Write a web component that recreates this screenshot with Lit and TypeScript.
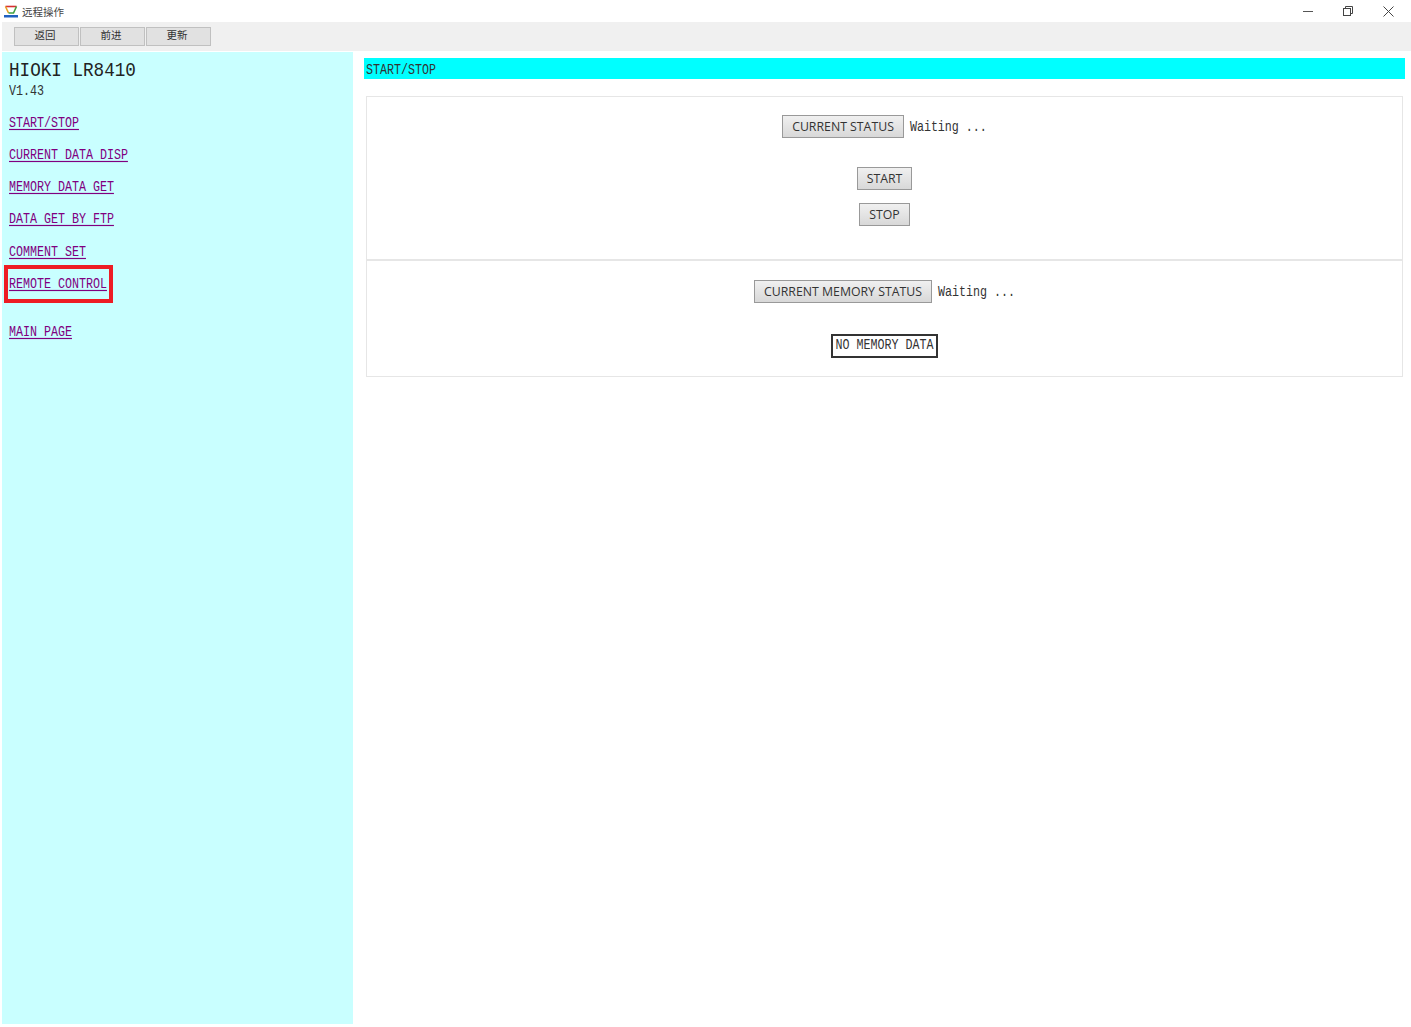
import { LitElement, html, css } from "lit";
import { customElement } from "lit/decorators.js";

@customElement("app-root")
export class AppRoot extends LitElement {
  static styles = css`
    :host { display: block; width: 1411px; height: 1027px; background: #fff; overflow: hidden; font-family: "Liberation Mono", monospace; color: #222; }
    .titlebar { height: 22px; display: flex; align-items: center; padding-left: 4px; }
    .logo { display: block; margin-right: 4px; }
    .title { font: 10.5px "Noto Sans CJK SC", sans-serif; color: #444; }
    .winctl { margin-left: auto; display: flex; gap: 30px; padding-right: 17px; align-items: center; }
    .winctl svg { display: block; }
    .toolbar { height: 29px; margin-left: 2px; background: #f0f0f0; display: flex; gap: 1px; padding: 4.5px 0 0 11.5px; box-sizing: border-box; }
    .tb { width: 65px; height: 19px; box-sizing: border-box; background: #e1e1e1; border: 1.5px solid #c0c0c0; font: 10.5px/14px "Noto Sans CJK SC", sans-serif; color: #333; text-align: center; padding-right: 2px; }
    .body { display: flex; height: 972px; margin-top: 1px; }
    .side { width: 351px; margin-left: 2px; background: #c9ffff; padding: 8px 0 0 7px; box-sizing: border-box; position: relative; }
    .mono { font-size: 11.67px; transform: scaleY(1.18); color: #333; white-space: pre; }
    .h1 { font-size: 17.64px; line-height: 20px; transform: scaleY(1.18); transform-origin: left center; color: #222; }
    .ver { line-height: 16px; margin-top: 3px; transform-origin: left center; }
    .links { display: flex; flex-direction: column; margin-top: 16px; }
    a { line-height: 16px; height: 16px; margin-bottom: 16.15px; align-self: flex-start; transform-origin: left center; }
    a.mono { color: #800080; text-decoration: underline; text-underline-offset: 2px; }
    a.gap { margin-top: 16px; }
    .mark { position: absolute; left: 2px; top: 213px; width: 109px; height: 38px; border: 4px solid #ed1c24; box-sizing: border-box; }
    .main { flex: 1; padding: 6px 6px 0 11px; min-width: 0; }
    .head { height: 21px; background: #00ffff; padding-left: 2px; line-height: 27px; }
    .head span { display: block; transform-origin: left center; }
    .box { margin: 17px 2px 0 2px; border: 1px solid #e6e6e6; display: flex; flex-direction: column; }
    .sec { display: flex; flex-direction: column; align-items: center; }
    .s1 { height: 164px; padding-top: 18px; box-sizing: border-box; border-bottom: 2px solid #e6e6e6; }
    .s2 { height: 115px; padding-top: 19px; box-sizing: border-box; }
    .row { display: flex; align-items: center; gap: 6px; height: 23px; }
    .btn { height: 23px; box-sizing: border-box; padding: 0 9px; background: linear-gradient(#f0f0f0, #d8d8d8); border: 1px solid #999; font: 12.3px/21px "Open Sans", sans-serif; color: #333; white-space: nowrap; }
    .b1 { margin-top: 29px; }
    .b2 { margin-top: 13px; }
    .nomem { margin-top: 31px; height: 24px; box-sizing: border-box; border: 2px solid #333; padding: 0 2.5px; line-height: 21px; }
    .nomem span { display: block; }
  `;

  render() {
    const links = ["START/STOP", "CURRENT DATA DISP", "MEMORY DATA GET", "DATA GET BY FTP", "COMMENT SET", "REMOTE CONTROL"];
    return html`
      <div class="titlebar">
        <svg class="logo" width="14" height="13" viewBox="0 0 14 13">
          <path d="M1.5 1.5h11" stroke="#d83030" stroke-width="1.6"/>
          <path d="M1.5 1.5l3 6.5" stroke="#e8a020" stroke-width="1.6" fill="none"/>
          <path d="M12.5 1.5l-3 6.5H4.5" stroke="#40a040" stroke-width="1.6" fill="none"/>
          <rect x="0" y="10" width="14" height="2.5" fill="#2060c0"/>
        </svg>
        <span class="title">远程操作</span>
        <div class="winctl">
          <svg width="10" height="10" viewBox="0 0 10 10"><path d="M0 5.5h10" stroke="#555"/></svg>
          <svg width="10" height="10" viewBox="0 0 10 10" fill="none" stroke="#444"><rect x=".5" y="2.5" width="7" height="7"/><path d="M2.5 2.5v-2h7v7h-2"/></svg>
          <svg width="11" height="11" viewBox="0 0 11 11"><path d="M.5.5l10 10M10.5.5l-10 10" stroke="#444"/></svg>
        </div>
      </div>
      <div class="toolbar">
        <div class="tb">返回</div><div class="tb">前进</div><div class="tb">更新</div>
      </div>
      <div class="body">
        <div class="side">
          <div class="h1">HIOKI LR8410</div>
          <div class="ver mono">V1.43</div>
          <div class="links">
            ${links.map((l) => html`<a class="mono">${l}</a>`)}
            <a class="mono gap">MAIN PAGE</a>
          </div>
          <div class="mark"></div>
        </div>
        <div class="main">
          <div class="head"><span class="mono">START/STOP</span></div>
          <div class="box">
            <div class="sec s1">
              <div class="row"><div class="btn">CURRENT STATUS</div><span class="mono">Waiting ...</span></div>
              <div class="btn b1">START</div>
              <div class="btn b2">STOP</div>
            </div>
            <div class="sec s2">
              <div class="row"><div class="btn">CURRENT MEMORY STATUS</div><span class="mono">Waiting ...</span></div>
              <div class="nomem"><span class="mono">NO MEMORY DATA</span></div>
            </div>
          </div>
        </div>
      </div>
    `;
  }
}
